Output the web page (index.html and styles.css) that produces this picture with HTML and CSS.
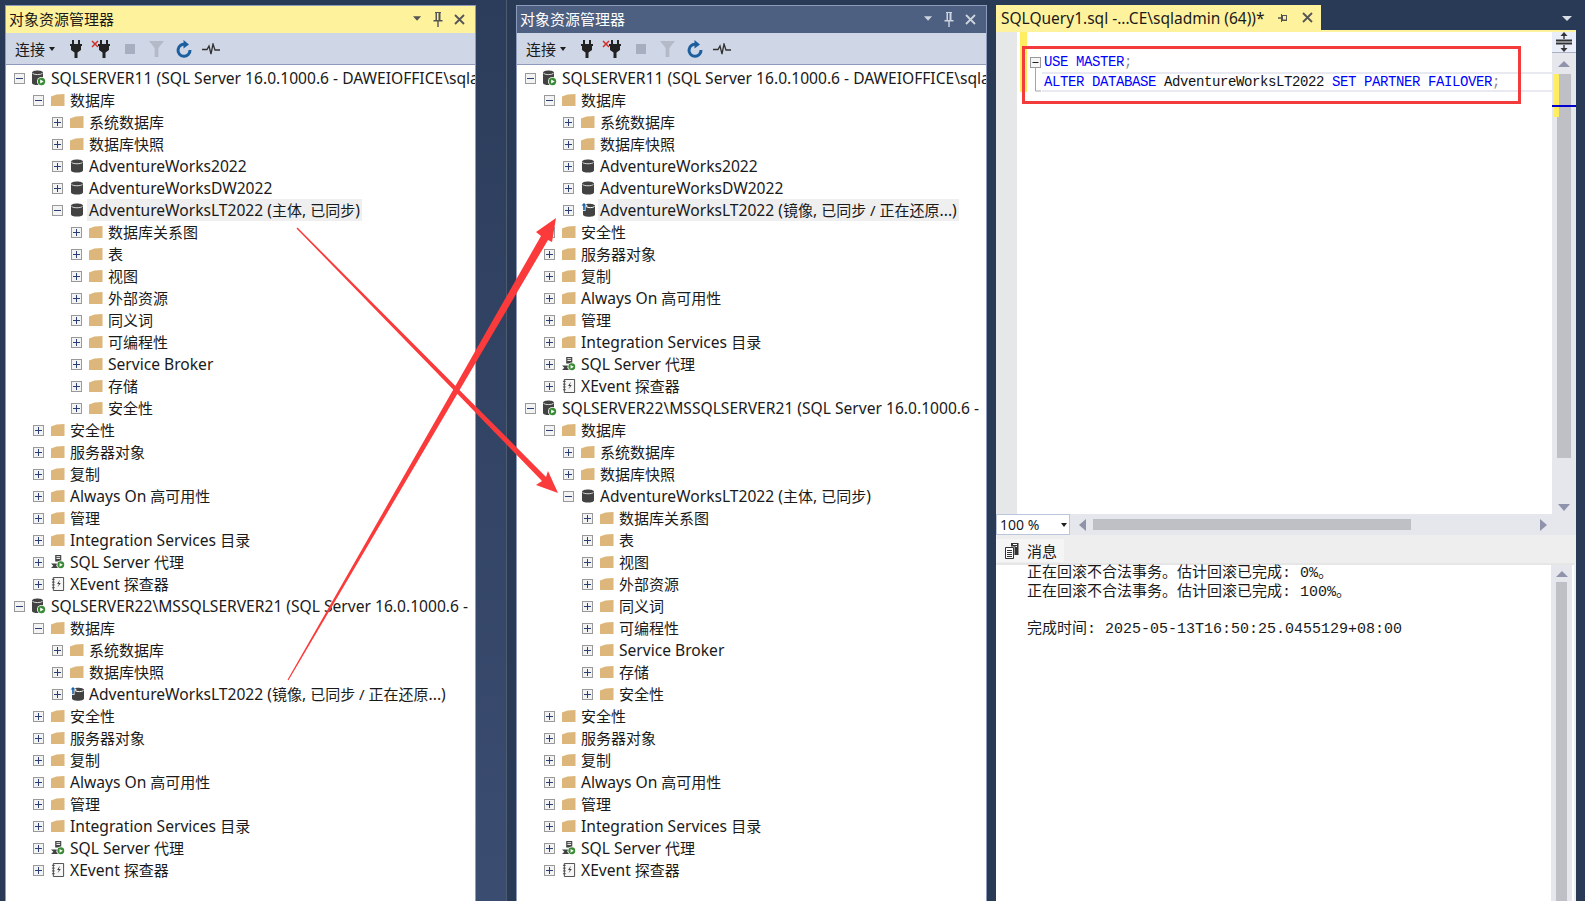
FILE: index.html
```html
<!DOCTYPE html>
<html lang="zh-CN">
<head>
<meta charset="utf-8">
<title>SSMS</title>
<link rel="stylesheet" href="styles.css">
</head>
<body>
<svg class="defs" width="0" height="0" aria-hidden="true">
  <symbol id="folder" viewBox="0 0 14 12"><path d="M0 2.500 5.500.5 13.500 0V12H0Z" fill="#dcb67a"/></symbol>
  <symbol id="db" viewBox="0 0 14 14"><path d="M1 2.800C1 -.4 13 -.4 13 2.800V11.200C13 14.400 1 14.400 1 11.200Z" fill="#424242"/><path d="M1.500 3.400C3 5.200 11 5.200 12.500 3.400" fill="none" stroke="#fff" stroke-width=".8"/></symbol>
  <symbol id="mirror" viewBox="0 0 16 16"><path d="M3 4C3 1 15 1 15 4V12.500C15 15.500 3 15.500 3 12.500Z" fill="#424242"/><path d="M6 4.600C8 6 13 6 14.500 4.500" fill="none" stroke="#fff"/><path d="M4 0 0 4.200H2.500V9H5.500V4.200H8Z" fill="#fff"/><path d="M4 1 1.500 3.600H3.200V8.300H4.800V3.600H6.500Z" fill="#0e5fa8"/></symbol>
  <symbol id="server" viewBox="0 0 15 16"><path d="M1 2.800C1 -.2 12 -.2 12 2.800V13C12 15.800 1 15.800 1 13Z" fill="#424242"/><path d="M1.500 3.400C3 5 10 5 11.500 3.400" fill="none" stroke="#fff" stroke-width=".8"/><circle cx="10.500" cy="11.500" r="4.500" fill="#fff"/><circle cx="10.500" cy="11.500" r="3.700" fill="#388a34"/><path d="M9.200 9.500 12.700 11.500 9.200 13.500Z" fill="#fff"/></symbol>
  <symbol id="agent" viewBox="0 0 15 15"><path d="M4.500 0H11V7H4.500Z" fill="#424242"/><path d="M5.800 1.800H9.800M5.800 3.800H9.800" stroke="#fff"/><path d="M0 9H8L5.500 11.500 8 14H0L2.500 11.500Z" fill="#424242"/><circle cx="10.500" cy="10.500" r="4.500" fill="#fff"/><circle cx="10.500" cy="10.500" r="3.700" fill="#388a34"/><path d="M9.200 8.500 12.700 10.500 9.200 12.500Z" fill="#fff"/></symbol>
  <symbol id="xevent" viewBox="0 0 13 15"><path d="M1.500.5H12.500V14.500H1.500Z" fill="#f6f6f6" stroke="#424242"/><path d="M0 2.500H3M0 5.500H3M0 8.500H3M0 11.500H3" stroke="#424242"/><path d="M8.500 3 5.500 7.500H7.500L6 11 9.500 6.500H7.500Z" fill="#424242"/></symbol>
  <symbol id="plug" viewBox="0 0 12 18"><path d="M2 0H4V4H8V0H10V4H12V6H11V10L7.500 12.500V18H4.500V12.500L1 10V6H0V4H2Z" fill="#222"/></symbol>
</svg>

<div class="desk">
  <section class="panel panel-active">
    <header class="title"><span class="title-text">对象资源管理器</span>
      <svg class="tic" viewBox="0 0 10 6"><path d="M0 0H9L4.500 5Z"/></svg>
      <svg class="tic pin" viewBox="0 0 10 15"><path d="M2 0H8V1H7.500V8H9.500V9.500H5.700V15H4.300V9.500H.5V8H2.500V1H2ZM4 1V8H5.500V1Z"/></svg>
      <svg class="tic close" viewBox="0 0 11 11"><path d="M1 1 10 10M10 1 1 10" stroke-width="1.800"/></svg>
    </header>
    <div class="toolbar">
      <span class="connect">连接</span><i class="caret"></i>
      <span class="tb"><svg class="t-plug"><use href="#plug"/></svg></span>
      <span class="tb"><svg class="t-x" viewBox="0 0 8 8"><path d="M1 1 7 7M7 1 1 7"/></svg><svg class="t-plug"><use href="#plug"/></svg></span>
      <span class="tb"><i class="stop"></i></span>
      <span class="tb"><svg class="t-filter" viewBox="0 0 16 17"><path d="M0 0H16L10 7.500V17H6V7.500Z"/></svg></span>
      <span class="tb"><svg class="t-ref" viewBox="0 0 16 18"><path d="M9.500 4.500A6 6 0 1 0 14 10" fill="none" stroke="#1c5f9e" stroke-width="3"/><path d="M7.500 0 13 4.500 7.500 8.500Z" fill="#1c5f9e"/></svg></span>
      <span class="tb"><svg class="t-pulse" viewBox="0 0 18 12"><path d="M0 6.500H5L7 3 9 11 11 1 13 7H18" fill="none" stroke="#333" stroke-width="1.300"/></svg></span>
    </div>
    <div class="tree">
      <div class="row lv0"><i class="exp minus"></i><svg class="ico srv"><use href="#server"/></svg><span>SQLSERVER11 (SQL Server 16.0.1000.6 - DAWEIOFFICE\sqla</span></div>
      <div class="row lv1"><i class="exp minus"></i><svg class="ico"><use href="#folder"/></svg><span class="zh">数据库</span></div>
      <div class="row lv2"><i class="exp plus"></i><svg class="ico"><use href="#folder"/></svg><span class="zh">系统数据库</span></div>
      <div class="row lv2"><i class="exp plus"></i><svg class="ico"><use href="#folder"/></svg><span class="zh">数据库快照</span></div>
      <div class="row lv2"><i class="exp plus"></i><svg class="ico"><use href="#db"/></svg><span>AdventureWorks2022</span></div>
      <div class="row lv2"><i class="exp plus"></i><svg class="ico"><use href="#db"/></svg><span>AdventureWorksDW2022</span></div>
      <div class="row lv2"><i class="exp minus"></i><svg class="ico"><use href="#db"/></svg><span class="sel">AdventureWorksLT2022 (<span class="zh">主体</span>, <span class="zh">已同步</span>)</span></div>
      <div class="row lv3"><i class="exp plus"></i><svg class="ico"><use href="#folder"/></svg><span class="zh">数据库关系图</span></div>
      <div class="row lv3"><i class="exp plus"></i><svg class="ico"><use href="#folder"/></svg><span class="zh">表</span></div>
      <div class="row lv3"><i class="exp plus"></i><svg class="ico"><use href="#folder"/></svg><span class="zh">视图</span></div>
      <div class="row lv3"><i class="exp plus"></i><svg class="ico"><use href="#folder"/></svg><span class="zh">外部资源</span></div>
      <div class="row lv3"><i class="exp plus"></i><svg class="ico"><use href="#folder"/></svg><span class="zh">同义词</span></div>
      <div class="row lv3"><i class="exp plus"></i><svg class="ico"><use href="#folder"/></svg><span class="zh">可编程性</span></div>
      <div class="row lv3"><i class="exp plus"></i><svg class="ico"><use href="#folder"/></svg><span>Service Broker</span></div>
      <div class="row lv3"><i class="exp plus"></i><svg class="ico"><use href="#folder"/></svg><span class="zh">存储</span></div>
      <div class="row lv3"><i class="exp plus"></i><svg class="ico"><use href="#folder"/></svg><span class="zh">安全性</span></div>
      <div class="row lv1"><i class="exp plus"></i><svg class="ico"><use href="#folder"/></svg><span class="zh">安全性</span></div>
      <div class="row lv1"><i class="exp plus"></i><svg class="ico"><use href="#folder"/></svg><span class="zh">服务器对象</span></div>
      <div class="row lv1"><i class="exp plus"></i><svg class="ico"><use href="#folder"/></svg><span class="zh">复制</span></div>
      <div class="row lv1"><i class="exp plus"></i><svg class="ico"><use href="#folder"/></svg><span>Always On <span class="zh">高可用性</span></span></div>
      <div class="row lv1"><i class="exp plus"></i><svg class="ico"><use href="#folder"/></svg><span class="zh">管理</span></div>
      <div class="row lv1"><i class="exp plus"></i><svg class="ico"><use href="#folder"/></svg><span>Integration Services <span class="zh">目录</span></span></div>
      <div class="row lv1"><i class="exp plus"></i><svg class="ico"><use href="#agent"/></svg><span>SQL Server <span class="zh">代理</span></span></div>
      <div class="row lv1"><i class="exp plus"></i><svg class="ico"><use href="#xevent"/></svg><span>XEvent <span class="zh">探查器</span></span></div>
      <div class="row lv0"><i class="exp minus"></i><svg class="ico srv"><use href="#server"/></svg><span>SQLSERVER22\MSSQLSERVER21 (SQL Server 16.0.1000.6 -</span></div>
      <div class="row lv1"><i class="exp minus"></i><svg class="ico"><use href="#folder"/></svg><span class="zh">数据库</span></div>
      <div class="row lv2"><i class="exp plus"></i><svg class="ico"><use href="#folder"/></svg><span class="zh">系统数据库</span></div>
      <div class="row lv2"><i class="exp plus"></i><svg class="ico"><use href="#folder"/></svg><span class="zh">数据库快照</span></div>
      <div class="row lv2"><i class="exp plus"></i><svg class="ico big"><use href="#mirror"/></svg><span>AdventureWorksLT2022 (<span class="zh">镜像</span>, <span class="zh">已同步 / 正在还原</span>...)</span></div>
      <div class="row lv1"><i class="exp plus"></i><svg class="ico"><use href="#folder"/></svg><span class="zh">安全性</span></div>
      <div class="row lv1"><i class="exp plus"></i><svg class="ico"><use href="#folder"/></svg><span class="zh">服务器对象</span></div>
      <div class="row lv1"><i class="exp plus"></i><svg class="ico"><use href="#folder"/></svg><span class="zh">复制</span></div>
      <div class="row lv1"><i class="exp plus"></i><svg class="ico"><use href="#folder"/></svg><span>Always On <span class="zh">高可用性</span></span></div>
      <div class="row lv1"><i class="exp plus"></i><svg class="ico"><use href="#folder"/></svg><span class="zh">管理</span></div>
      <div class="row lv1"><i class="exp plus"></i><svg class="ico"><use href="#folder"/></svg><span>Integration Services <span class="zh">目录</span></span></div>
      <div class="row lv1"><i class="exp plus"></i><svg class="ico"><use href="#agent"/></svg><span>SQL Server <span class="zh">代理</span></span></div>
      <div class="row lv1"><i class="exp plus"></i><svg class="ico"><use href="#xevent"/></svg><span>XEvent <span class="zh">探查器</span></span></div>
    </div>
  </section>

  <div class="split"><div class="split-band"></div><div class="split-dark"></div></div>

  <section class="panel panel-idle">
    <header class="title"><span class="title-text">对象资源管理器</span>
      <svg class="tic" viewBox="0 0 10 6"><path d="M0 0H9L4.500 5Z"/></svg>
      <svg class="tic pin" viewBox="0 0 10 15"><path d="M2 0H8V1H7.500V8H9.500V9.500H5.700V15H4.300V9.500H.5V8H2.500V1H2ZM4 1V8H5.500V1Z"/></svg>
      <svg class="tic close" viewBox="0 0 11 11"><path d="M1 1 10 10M10 1 1 10" stroke-width="1.800"/></svg>
    </header>
    <div class="toolbar">
      <span class="connect">连接</span><i class="caret"></i>
      <span class="tb"><svg class="t-plug"><use href="#plug"/></svg></span>
      <span class="tb"><svg class="t-x" viewBox="0 0 8 8"><path d="M1 1 7 7M7 1 1 7"/></svg><svg class="t-plug"><use href="#plug"/></svg></span>
      <span class="tb"><i class="stop"></i></span>
      <span class="tb"><svg class="t-filter" viewBox="0 0 16 17"><path d="M0 0H16L10 7.500V17H6V7.500Z"/></svg></span>
      <span class="tb"><svg class="t-ref" viewBox="0 0 16 18"><path d="M9.500 4.500A6 6 0 1 0 14 10" fill="none" stroke="#1c5f9e" stroke-width="3"/><path d="M7.500 0 13 4.500 7.500 8.500Z" fill="#1c5f9e"/></svg></span>
      <span class="tb"><svg class="t-pulse" viewBox="0 0 18 12"><path d="M0 6.500H5L7 3 9 11 11 1 13 7H18" fill="none" stroke="#333" stroke-width="1.300"/></svg></span>
    </div>
    <div class="tree">
      <div class="row lv0"><i class="exp minus"></i><svg class="ico srv"><use href="#server"/></svg><span>SQLSERVER11 (SQL Server 16.0.1000.6 - DAWEIOFFICE\sqla</span></div>
      <div class="row lv1"><i class="exp minus"></i><svg class="ico"><use href="#folder"/></svg><span class="zh">数据库</span></div>
      <div class="row lv2"><i class="exp plus"></i><svg class="ico"><use href="#folder"/></svg><span class="zh">系统数据库</span></div>
      <div class="row lv2"><i class="exp plus"></i><svg class="ico"><use href="#folder"/></svg><span class="zh">数据库快照</span></div>
      <div class="row lv2"><i class="exp plus"></i><svg class="ico"><use href="#db"/></svg><span>AdventureWorks2022</span></div>
      <div class="row lv2"><i class="exp plus"></i><svg class="ico"><use href="#db"/></svg><span>AdventureWorksDW2022</span></div>
      <div class="row lv2"><i class="exp plus"></i><svg class="ico big"><use href="#mirror"/></svg><span class="sel">AdventureWorksLT2022 (<span class="zh">镜像</span>, <span class="zh">已同步 / 正在还原</span>...)</span></div>
      <div class="row lv1"><i class="exp plus"></i><svg class="ico"><use href="#folder"/></svg><span class="zh">安全性</span></div>
      <div class="row lv1"><i class="exp plus"></i><svg class="ico"><use href="#folder"/></svg><span class="zh">服务器对象</span></div>
      <div class="row lv1"><i class="exp plus"></i><svg class="ico"><use href="#folder"/></svg><span class="zh">复制</span></div>
      <div class="row lv1"><i class="exp plus"></i><svg class="ico"><use href="#folder"/></svg><span>Always On <span class="zh">高可用性</span></span></div>
      <div class="row lv1"><i class="exp plus"></i><svg class="ico"><use href="#folder"/></svg><span class="zh">管理</span></div>
      <div class="row lv1"><i class="exp plus"></i><svg class="ico"><use href="#folder"/></svg><span>Integration Services <span class="zh">目录</span></span></div>
      <div class="row lv1"><i class="exp plus"></i><svg class="ico"><use href="#agent"/></svg><span>SQL Server <span class="zh">代理</span></span></div>
      <div class="row lv1"><i class="exp plus"></i><svg class="ico"><use href="#xevent"/></svg><span>XEvent <span class="zh">探查器</span></span></div>
      <div class="row lv0"><i class="exp minus"></i><svg class="ico srv"><use href="#server"/></svg><span>SQLSERVER22\MSSQLSERVER21 (SQL Server 16.0.1000.6 -</span></div>
      <div class="row lv1"><i class="exp minus"></i><svg class="ico"><use href="#folder"/></svg><span class="zh">数据库</span></div>
      <div class="row lv2"><i class="exp plus"></i><svg class="ico"><use href="#folder"/></svg><span class="zh">系统数据库</span></div>
      <div class="row lv2"><i class="exp plus"></i><svg class="ico"><use href="#folder"/></svg><span class="zh">数据库快照</span></div>
      <div class="row lv2"><i class="exp minus"></i><svg class="ico"><use href="#db"/></svg><span>AdventureWorksLT2022 (<span class="zh">主体</span>, <span class="zh">已同步</span>)</span></div>
      <div class="row lv3"><i class="exp plus"></i><svg class="ico"><use href="#folder"/></svg><span class="zh">数据库关系图</span></div>
      <div class="row lv3"><i class="exp plus"></i><svg class="ico"><use href="#folder"/></svg><span class="zh">表</span></div>
      <div class="row lv3"><i class="exp plus"></i><svg class="ico"><use href="#folder"/></svg><span class="zh">视图</span></div>
      <div class="row lv3"><i class="exp plus"></i><svg class="ico"><use href="#folder"/></svg><span class="zh">外部资源</span></div>
      <div class="row lv3"><i class="exp plus"></i><svg class="ico"><use href="#folder"/></svg><span class="zh">同义词</span></div>
      <div class="row lv3"><i class="exp plus"></i><svg class="ico"><use href="#folder"/></svg><span class="zh">可编程性</span></div>
      <div class="row lv3"><i class="exp plus"></i><svg class="ico"><use href="#folder"/></svg><span>Service Broker</span></div>
      <div class="row lv3"><i class="exp plus"></i><svg class="ico"><use href="#folder"/></svg><span class="zh">存储</span></div>
      <div class="row lv3"><i class="exp plus"></i><svg class="ico"><use href="#folder"/></svg><span class="zh">安全性</span></div>
      <div class="row lv1"><i class="exp plus"></i><svg class="ico"><use href="#folder"/></svg><span class="zh">安全性</span></div>
      <div class="row lv1"><i class="exp plus"></i><svg class="ico"><use href="#folder"/></svg><span class="zh">服务器对象</span></div>
      <div class="row lv1"><i class="exp plus"></i><svg class="ico"><use href="#folder"/></svg><span class="zh">复制</span></div>
      <div class="row lv1"><i class="exp plus"></i><svg class="ico"><use href="#folder"/></svg><span>Always On <span class="zh">高可用性</span></span></div>
      <div class="row lv1"><i class="exp plus"></i><svg class="ico"><use href="#folder"/></svg><span class="zh">管理</span></div>
      <div class="row lv1"><i class="exp plus"></i><svg class="ico"><use href="#folder"/></svg><span>Integration Services <span class="zh">目录</span></span></div>
      <div class="row lv1"><i class="exp plus"></i><svg class="ico"><use href="#agent"/></svg><span>SQL Server <span class="zh">代理</span></span></div>
      <div class="row lv1"><i class="exp plus"></i><svg class="ico"><use href="#xevent"/></svg><span>XEvent <span class="zh">探查器</span></span></div>
    </div>
  </section>

  <main class="editor">
    <div class="tabstrip">
      <div class="doc-tab"><span>SQLQuery1.sql -...CE\sqladmin (64))*</span>
        <svg class="dt-pin" viewBox="0 0 12 10"><path d="M0 4.300H3V1H4V2H9V8H4V9H3V5.700H0ZM5 3V6.500H8V3Z" fill="#555"/></svg>
        <svg class="dt-close" viewBox="0 0 11 11"><path d="M1 1 10 10M10 1 1 10" stroke="#555" stroke-width="1.800"/></svg>
      </div>
      <i class="strip-menu"></i>
    </div>
    <div class="strip-line"></div>
    <div class="query">
      <div class="query-left">
        <div class="code-area">
          <div class="gutter"></div>
          <div class="change-bar"></div>
          <svg class="fold" viewBox="0 0 12 36"><rect x=".5" y=".5" width="10" height="10" fill="#f6f6f6" stroke="#999"/><path d="M2.500 5.500H8.500" stroke="#222"/><path d="M5.500 11V34H11" fill="none" stroke="#a5a5a5"/></svg>
          <div class="code">
            <div class="line"><b>USE MASTER</b><em>;</em></div>
            <div class="line cur"><b>ALTER DATABASE</b> AdventureWorksLT2022 <b>SET PARTNER FAILOVER</b><em>;</em></div>
          </div>
        </div>
        <div class="hbar">
          <div class="zoom-box"><span>100 %</span><i class="caret"></i></div>
          <i class="arr-l"></i><div class="h-thumb"></div><i class="arr-r"></i>
        </div>
      </div>
      <div class="vscroll">
        <div class="splitter"><svg viewBox="0 0 16 20"><path d="M0 8.500H16M0 11.500H16" stroke="#333" stroke-width="1.800"/><path d="M8 0 11.500 4H4.500ZM8 20 11.500 16H4.500Z" fill="#333"/><path d="M8 3V7M8 13V17" stroke="#333" stroke-width="1.400"/></svg></div>
        <i class="arr-u"></i>
        <div class="v-track">
          <div class="v-thumb"></div>
          <div class="v-yellow"></div>
          <div class="v-blue"></div>
        </div>
        <i class="arr-d"></i>
      </div>
    </div>
    <div class="results">
      <div class="res-tabs"><div class="res-tab">
        <svg class="msg-ico" viewBox="0 0 14 16"><path d="M.5 4.500H8.500V15.500H.5Z" fill="#fff" stroke="#333"/><path d="M2 7.500H7M2 9.500H7M2 11.500H7M2 13.500H7" stroke="#333"/><path d="M6 0H13.500V12H9.500V3.500H6Z" fill="#333"/><path d="M8 1.500H12M10.500 3.500H12" stroke="#fff"/></svg>
        <span>消息</span></div></div>
      <div class="res-pane">
        <div class="res-text">
          <div class="msg">正在回滚不合法事务。估计回滚已完成: 0%。</div>
          <div class="msg">正在回滚不合法事务。估计回滚已完成: 100%。</div>
          <div class="msg">&nbsp;</div>
          <div class="msg">完成时间: 2025-05-13T16:50:25.0455129+08:00</div>
        </div>
        <div class="res-scroll"><i class="arr-u"></i><div class="res-thumb"></div></div>
      </div>
    </div>
  </main>
  <div class="edge"></div>
</div>

<div class="redbox"></div>
<svg class="arrows" viewBox="0 0 1585 901">
  <polygon points="297.500,227.500 546,477 548,471 558,493 536,485 542,481 296.500,228.500"/>
  <polygon points="288.500,680.300 548,240 552,242 556,218 536,232 541,236 287.500,679.700"/>
</svg>
</body>
</html>
```

FILE: styles.css
```css
* { box-sizing: border-box; }
html, body { margin: 0; height: 100%; overflow: hidden; }
body {
  background: #293a56;
  font: 15px/22px "Noto Sans", "Noto Sans CJK SC", sans-serif;
  color: #1a1a1a;
}
i, em { font-style: normal; }
.defs { position: absolute; }

.desk { display: flex; height: 901px; padding-left: 5px; }

.panel {
  width: 471px;
  margin-top: 5px;
  border: 1px solid #8e9bbc;
  border-bottom: 0;
  display: flex;
  flex-direction: column;
  background: #fff;
  flex: none;
}
.title {
  height: 27px;
  display: flex;
  align-items: center;
  padding-left: 3px;
  padding-bottom: 1px;
  flex: none;
}
.title-text { flex: 1; }
.panel-active .title { background: #fff29d; color: #1a1a1a; fill: #555; stroke: #555; }
.panel-idle .title { background: #4d6082; color: #fff; fill: #ced4dd; stroke: #ced4dd; }
.tic { width: 9px; height: 6px; margin-right: 11px; stroke: none; }
.tic.pin { width: 10px; height: 15px; margin-right: 11px; }
.tic.close { width: 11px; height: 11px; margin-right: 10px; fill: none; }
.panel-active .tic.close { stroke: #555; }
.panel-idle .tic.close { stroke: #ced4dd; }

.toolbar {
  height: 32px;
  background: #cfd6e5;
  border-bottom: 1px solid #8e9bbc;
  display: flex;
  align-items: center;
  padding-left: 9px;
  flex: none;
}
.connect { width: 34px; }
.caret {
  width: 0; height: 0;
  border: 3.5px solid transparent;
  border-top: 4px solid #1e1e1e;
  border-bottom: 0;
}
.toolbar .caret { margin-right: 7px; }
.tb {
  width: 27px;
  height: 22px;
  display: flex;
  align-items: center;
  justify-content: center;
}
.t-plug { width: 12px; height: 18px; }
.t-x { width: 8px; height: 8px; stroke: #d0302c; stroke-width: 1.500; margin: -10px -1px 0 -4px; }
.stop { width: 10px; height: 10px; background: #a6aebf; }
.t-filter { width: 15px; height: 16px; fill: #b4bac8; }
.t-ref { width: 16px; height: 18px; }
.t-pulse { width: 18px; height: 12px; }

.tree { flex: 1; overflow: hidden; padding-top: 2px; }
.row {
  height: 22px;
  display: flex;
  align-items: center;
  white-space: nowrap;
  font-size: 15.6px;
  overflow: hidden;
}
.zh { font-size: 15px; }
.lv0 { padding-left: 8px; }
.lv1 { padding-left: 27px; }
.lv2 { padding-left: 46px; }
.lv3 { padding-left: 65px; }
.exp {
  flex: none;
  width: 11px;
  height: 11px;
  margin: 1px 5px 0 0;
  border: 1px solid #999;
  background: #f3f3f3;
  position: relative;
}
.exp::before {
  content: "";
  position: absolute;
  left: 1px; top: 4px;
  width: 7px; height: 1px;
  background: #2b3f77;
}
.exp.plus::after {
  content: "";
  position: absolute;
  left: 4px; top: 1px;
  width: 1px; height: 7px;
  background: #2b3f77;
}
.ico { flex: none; width: 14px; height: 14px; margin: 0 5px 0 2px; }
.ico.srv { width: 15px; height: 16px; margin: 0 5px 0 1px; }
.ico.big { width: 16px; height: 16px; margin: 0 4px 0 1px; }
.sel { background: #efefef; margin-left: -2px; padding: 0 2px; }

.split { flex: none; width: 40px; display: flex; }
.split-band { width: 31px; background: linear-gradient(#2c3d5b, #3a4c70); border-right: 1px solid #4d5a70; }
.split-dark { flex: 1; background: #293a56; }

.editor {
  flex: none;
  width: 580px;
  margin-left: 9px;
  display: flex;
  flex-direction: column;
}
.tabstrip {
  height: 30px;
  padding-top: 5px;
  display: flex;
  justify-content: space-between;
  flex: none;
}
.doc-tab {
  width: 325px;
  background: #fff29d;
  display: flex;
  align-items: center;
  padding-left: 5px;
}
.doc-tab span { flex: 1; font-size: 15.5px; padding-top: 1px; }
.dt-pin { width: 12px; height: 10px; margin-right: 12px; }
.dt-close { width: 11px; height: 11px; margin-right: 8px; }
.strip-menu {
  width: 0; height: 0;
  border: 5px solid transparent;
  border-top: 5px solid #d8dde6;
  border-bottom: 0;
  margin: 11px 4px 0 0;
}
.strip-line { height: 2px; background: #fff29d; flex: none; }

.query { flex: none; height: 503px; display: flex; }
.query-left { flex: 1; display: flex; flex-direction: column; min-width: 0; }
.code-area { flex: 1; display: flex; background: #fff; }
.gutter { width: 21px; background: #e6e7e8; flex: none; }
.change-bar { width: 7px; height: 60px; margin-left: 3px; background: #ffee62; flex: none; }
.fold { flex: none; width: 12px; height: 36px; margin: 25px 0 0 3px; }
.code {
  flex: 1;
  padding-top: 20px;
  font: 14px/20px "Liberation Mono", monospace;
  letter-spacing: -0.4px;
  color: #111;
  min-width: 0;
}
.line { height: 20px; padding-left: 2px; white-space: pre; }
.line b { font-weight: 400; color: #0000ff; }
.line em { color: #888; }
.cur { border: solid #e9e9f1; border-width: 2px 0; line-height: 16px; }

.hbar {
  height: 21px;
  background: #e6e7ed;
  display: flex;
  align-items: center;
  flex: none;
}
.zoom-box {
  width: 74px;
  height: 21px;
  background: #fff;
  border: 1px solid #b9c6dc;
  display: flex;
  align-items: center;
  justify-content: space-between;
  padding: 0 2px 0 3px;
  font-size: 14px;
}
.arr-l, .arr-r, .arr-u, .arr-d { display: block; width: 0; height: 0; border-style: solid; border-color: transparent; flex: none; }
.arr-l { border-width: 6px 7px 6px 0; border-right-color: #8f93ab; margin-left: 9px; }
.h-thumb { width: 318px; height: 11px; background: #bfc0c6; margin-left: 7px; margin-right: 129px; }
.arr-r { border-width: 6px 0 6px 7px; border-left-color: #8f93ab; }

.vscroll {
  width: 24px;
  background: #e6e7ed;
  display: flex;
  flex-direction: column;
  align-items: center;
  flex: none;
}
.splitter {
  width: 24px;
  height: 21px;
  background: #e9eef8;
  border-bottom: 1px solid #aab1c5;
  display: flex;
  align-items: center;
  justify-content: center;
  flex: none;
}
.splitter svg { width: 16px; height: 20px; }
.arr-u { border-width: 0 6px 6px; border-bottom-color: #8f93ab; }
.arr-d { border-width: 7px 6px 0; border-top-color: #8f93ab; margin: 6px 0 24px; }
.vscroll > .arr-u { margin: 8px 0 7px; }
.v-track { width: 24px; flex: 1; position: relative; }
.v-thumb { width: 14px; height: 384px; margin-left: 5px; background: #bfc0c6; }
.v-yellow { position: absolute; left: 2px; top: 0; width: 5px; height: 43px; background: #ffee62; }
.v-blue { position: absolute; left: 0; top: 31px; width: 24px; height: 2px; background: #0000cd; }

.results { flex: 1; background: #eeeeef; display: flex; flex-direction: column; min-height: 0; }
.res-tabs { height: 28px; padding-top: 4px; flex: none; }
.res-tab {
  width: 68px;
  height: 23px;
  background: #f5f5f5;
  display: flex;
  align-items: center;
  padding-left: 9px;
}
.msg-ico { width: 14px; height: 16px; margin-right: 8px; }
.res-pane {
  flex: 1;
  min-height: 0;
  margin-right: 2px;
  border-top: 2px solid #e6e6e6;
  background: #fff;
  display: flex;
}
.res-text { flex: 1; padding: 0 0 0 31px; }
.msg { height: 18.500px; line-height: 18.500px; font-family: "Liberation Mono", "Noto Sans CJK SC", monospace; font-size: 15px; white-space: pre; }
.res-scroll {
  width: 21px;
  margin-right: 2px;
  background: #e6e7ed;
  display: flex;
  flex-direction: column;
  align-items: center;
  padding-top: 6px;
}
.res-thumb { width: 11px; flex: 1; margin-top: 5px; background: #bfc0c6; }

.edge { flex: 1; }

.redbox {
  position: absolute;
  left: 1022px; top: 46px;
  width: 499px; height: 58px;
  border: 3px solid #f33b3b;
}
.arrows {
  position: absolute;
  left: 0; top: 0;
  width: 1585px; height: 901px;
  fill: #fb3b3b;
  pointer-events: none;
}
```
